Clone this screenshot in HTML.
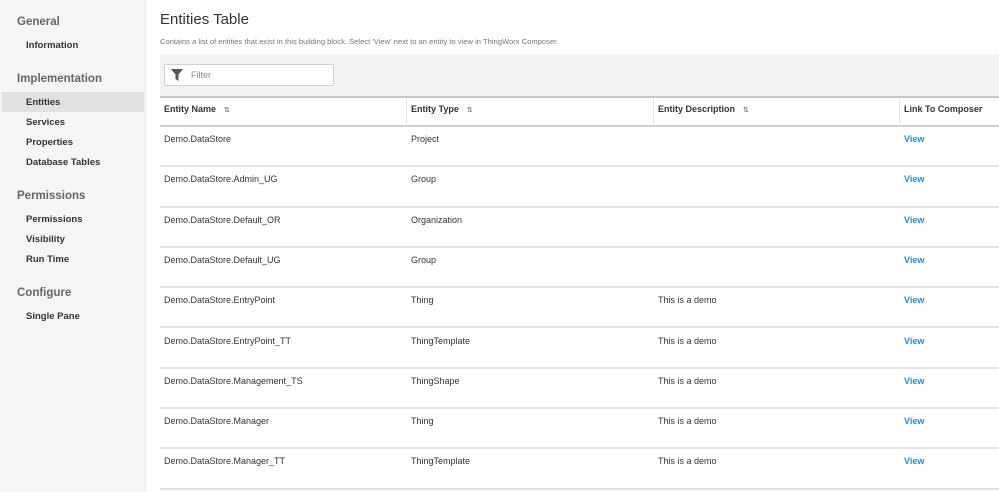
<!DOCTYPE html>
<html><head><style>
*{margin:0;padding:0;box-sizing:border-box}
body{width:999px;height:492px;overflow:hidden;background:#fff;font-family:"Liberation Sans",sans-serif;color:#333;position:relative}
#side{position:absolute;left:0;top:0;width:146px;height:492px;background:#f5f5f5;border-right:1px solid #ececec}
.sh{position:absolute;left:17px;font-size:11.5px;color:#666;font-weight:bold}
.si{position:absolute;left:26px;font-size:9.5px;font-weight:bold;color:#333}
.sel{position:absolute;left:2px;top:92px;width:142px;height:20px;background:#e1e1e1}
h1{position:absolute;left:160px;top:11px;font-size:15px;font-weight:normal;color:#333}
.desc{position:absolute;left:160px;top:37px;font-size:7.6px;color:#777}
.bar{position:absolute;left:160px;top:54px;width:839px;height:42px;background:#f3f3f3}
.filt{position:absolute;left:164px;top:64px;width:170px;height:22px;background:#fff;border:1px solid #d0d0d0;border-radius:2px}
.filt span{position:absolute;left:26px;top:5px;font-size:9px;color:#888}
.hdr{position:absolute;left:160px;top:96px;width:839px;height:31px;border-top:2px solid #c8c8c8;border-bottom:2px solid #cfcfcf}
.hc{position:absolute;top:0;height:29px;font-size:9px;font-weight:bold;color:#333;padding:6px 0 0 4px;border-left:1px solid #e4e4e4}
.row{position:absolute;left:160px;width:839px;height:40.3px;border-bottom:2px solid #e4e4e4;font-size:9px;color:#333}
.row span{position:absolute;top:7px}
.v{color:#2a8bc6;font-weight:bold}
.ar{font-size:7px;font-weight:normal;margin-left:8px;color:#555}
</style></head><body>
<div id="side">
<div class="sh" style="top:16px">General</div>
<div class="si" style="top:40px">Information</div>
<div class="sh" style="top:73px">Implementation</div>
<div class="sel"></div>
<div class="si" style="top:97px">Entities</div>
<div class="si" style="top:117px">Services</div>
<div class="si" style="top:137px">Properties</div>
<div class="si" style="top:157px">Database Tables</div>
<div class="sh" style="top:190px">Permissions</div>
<div class="si" style="top:214px">Permissions</div>
<div class="si" style="top:234px">Visibility</div>
<div class="si" style="top:254px">Run Time</div>
<div class="sh" style="top:287px">Configure</div>
<div class="si" style="top:311px">Single Pane</div>
</div>
<h1>Entities Table</h1>
<div class="desc">Contains a list of entities that exist in this building block. Select 'View' next to an entity to view in ThingWorx Composer.</div>
<div class="bar"></div>
<div class="filt"><svg style="position:absolute;left:6px;top:4px" width="12" height="12" viewBox="0 0 12 12"><path d="M0 0H12L7.5 5.5V12L4.5 10V5.5Z" fill="#555"/></svg><span>Filter</span></div>
<div class="hdr">
<div class="hc" style="left:0;border-left:none">Entity Name<span class="ar">⇅</span></div>
<div class="hc" style="left:246px">Entity Type<span class="ar">⇅</span></div>
<div class="hc" style="left:493px">Entity Description<span class="ar">⇅</span></div>
<div class="hc" style="left:739px">Link To Composer</div>
</div>
<div class="row" style="top:127px"><span style="left:4px">Demo.DataStore</span><span style="left:251px">Project</span><span class="v" style="left:744px">View</span></div>
<div class="row" style="top:167.3px"><span style="left:4px">Demo.DataStore.Admin_UG</span><span style="left:251px">Group</span><span class="v" style="left:744px">View</span></div>
<div class="row" style="top:207.6px"><span style="left:4px">Demo.DataStore.Default_OR</span><span style="left:251px">Organization</span><span class="v" style="left:744px">View</span></div>
<div class="row" style="top:247.9px"><span style="left:4px">Demo.DataStore.Default_UG</span><span style="left:251px">Group</span><span class="v" style="left:744px">View</span></div>
<div class="row" style="top:288.2px"><span style="left:4px">Demo.DataStore.EntryPoint</span><span style="left:251px">Thing</span><span style="left:498px">This is a demo</span><span class="v" style="left:744px">View</span></div>
<div class="row" style="top:328.5px"><span style="left:4px">Demo.DataStore.EntryPoint_TT</span><span style="left:251px">ThingTemplate</span><span style="left:498px">This is a demo</span><span class="v" style="left:744px">View</span></div>
<div class="row" style="top:368.8px"><span style="left:4px">Demo.DataStore.Management_TS</span><span style="left:251px">ThingShape</span><span style="left:498px">This is a demo</span><span class="v" style="left:744px">View</span></div>
<div class="row" style="top:409.1px"><span style="left:4px">Demo.DataStore.Manager</span><span style="left:251px">Thing</span><span style="left:498px">This is a demo</span><span class="v" style="left:744px">View</span></div>
<div class="row" style="top:449.4px"><span style="left:4px">Demo.DataStore.Manager_TT</span><span style="left:251px">ThingTemplate</span><span style="left:498px">This is a demo</span><span class="v" style="left:744px">View</span></div>
</body></html>
